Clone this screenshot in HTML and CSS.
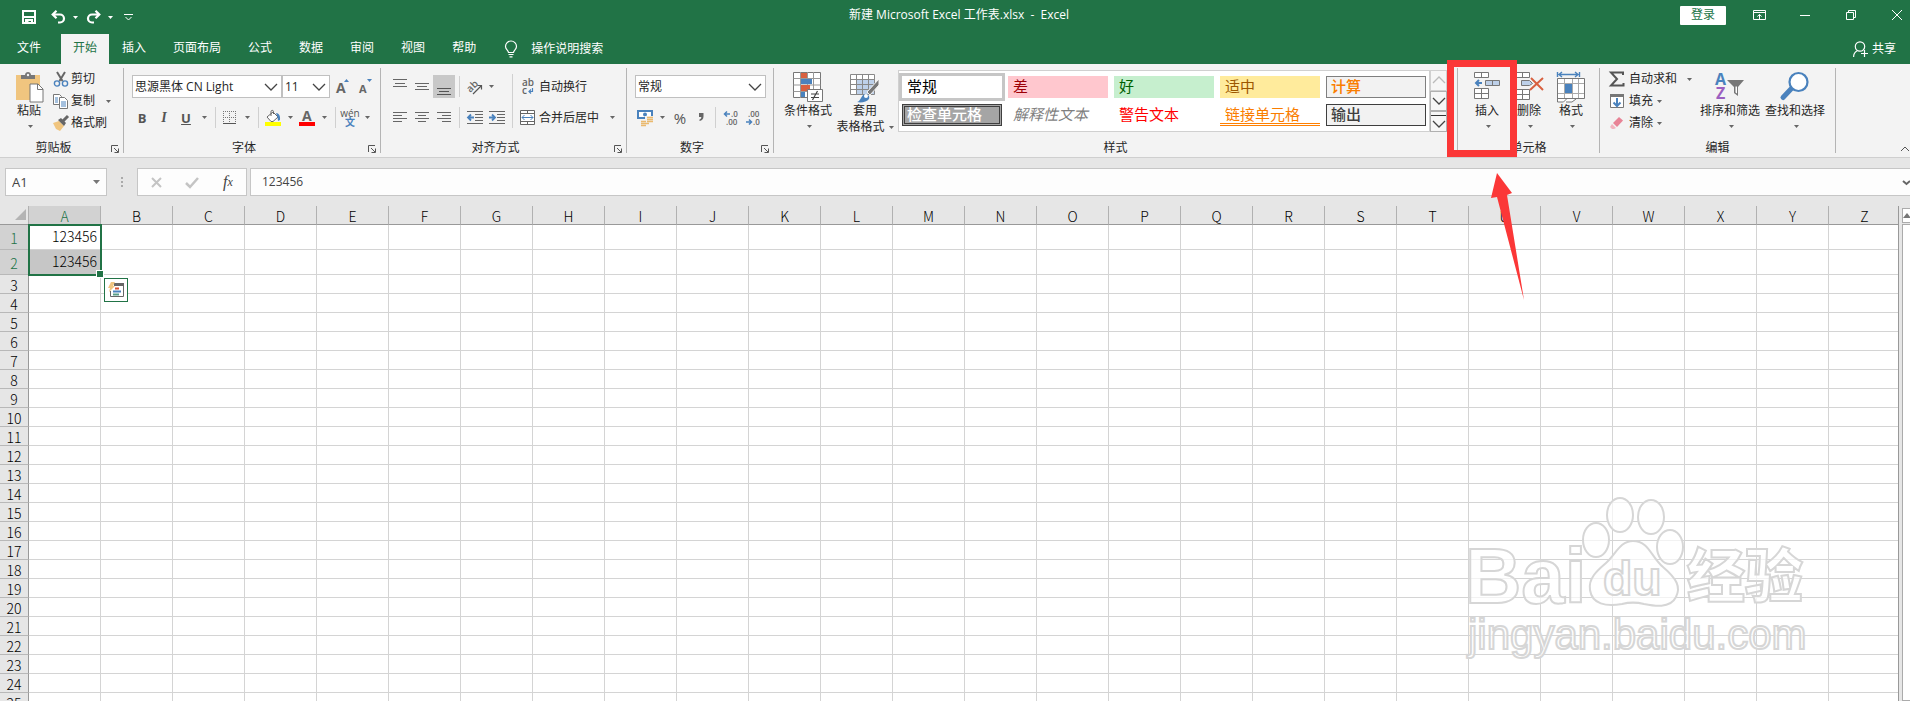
FILE: index.html
```
<!DOCTYPE html>
<html lang="zh-CN">
<head>
    <meta charset="UTF-8">
    <meta name="viewport" content="width=device-width, initial-scale=1.0">
    <title>新建 Microsoft Excel 工作表.xlsx - Excel</title>
    <link rel="stylesheet" href="styles.css">
</head>
<body>
    <svg class="defs" width="0" height="0">
        <symbol id="caret" viewBox="0 0 5 3"><path d="M0 0h5L2.500 3z" fill="currentColor"/></symbol>
        <symbol id="chevron" viewBox="0 0 14 8"><path d="M1 1l6 6 6-6" fill="none" stroke="currentColor" stroke-width="1.300"/></symbol>
        <symbol id="launch" viewBox="0 0 8 8"><path d="M.5 7V.5H7M3 3l4 4M7.500 3.500v4h-4" fill="none" stroke="#555"/></symbol>
    </svg>

    <!-- Title bar -->
    <header class="title-bar">
        <div class="quick-access">
            <button class="qa" aria-label="保存"><svg width="14" height="14" viewBox="0 0 14 14"><path d="M1 1h12v12H1zM1 7h12M4 13v-3h6v3" fill="none" stroke="#fff" stroke-width="2"/><path d="M4.500 11h2v2h-2z" fill="#fff"/></svg></button>
            <button class="qa undo" aria-label="撤消"><svg width="15" height="14" viewBox="0 0 15 14"><path d="M1.500 4.500H9a4 4 0 0 1 0 8H7M5.500.8L1.700 4.500l3.800 3.700" fill="none" stroke="#fff" stroke-width="2.200"/></svg></button>
            <button class="qa-caret" aria-label="撤消列表"><svg class="caret"><use href="#caret"/></svg></button>
            <button class="qa" aria-label="恢复"><svg width="15" height="14" viewBox="0 0 15 14"><path d="M13.500 4.500H6a4 4 0 0 0 0 8h2M9.500.8l3.800 3.700-3.800 3.700" fill="none" stroke="#fff" stroke-width="2.200"/></svg></button>
            <button class="qa-caret" aria-label="恢复列表"><svg class="caret"><use href="#caret"/></svg></button>
            <button class="qa" aria-label="自定义快速访问工具栏"><svg width="9" height="7" viewBox="0 0 9 7"><path d="M0 .5h9M1.500 3l3 3 3-3" fill="none" stroke="#fff"/></svg></button>
        </div>
        <div class="doc-title">新建 Microsoft Excel 工作表.xlsx&nbsp; -&nbsp; Excel</div>
        <div class="window-tools">
            <button class="login">登录</button>
            <button class="win" aria-label="功能区显示选项"><svg width="13" height="10" viewBox="0 0 13 10"><path d="M.5.5h12v9H.5zM.5 2.500h12M6.500 9V4.500M4.300 6.500l2.200-2 2.200 2" fill="none" stroke="#fff"/></svg></button>
            <button class="win" aria-label="最小化"><svg width="10" height="10" viewBox="0 0 10 10"><path d="M0 5.500h10" stroke="#fff"/></svg></button>
            <button class="win" aria-label="还原"><svg width="10" height="10" viewBox="0 0 10 10"><path d="M.5 2.500h7v7h-7zM2.500 2.500v-2h7v7h-2" fill="none" stroke="#fff"/></svg></button>
            <button class="win" aria-label="关闭"><svg width="10" height="10" viewBox="0 0 10 10"><path d="M0 0l10 10M10 0L0 10" stroke="#fff"/></svg></button>
        </div>
    </header>

    <!-- Ribbon tabs -->
    <nav class="tabs">
        <button class="tab file">文件</button>
        <button class="tab active">开始</button>
        <button class="tab">插入</button>
        <button class="tab">页面布局</button>
        <button class="tab">公式</button>
        <button class="tab">数据</button>
        <button class="tab">审阅</button>
        <button class="tab">视图</button>
        <button class="tab">帮助</button>
        <button class="tell-me"><svg width="12" height="17" viewBox="0 0 12 17"><path d="M3.500 11.500c0-2-3-3-3-6a5.500 5.500 0 0 1 11 0c0 3-3 4-3 6zM3.500 13.500h5M4.500 15.800h3" fill="none" stroke="#fff" stroke-width="1.200"/></svg>操作说明搜索</button>
        <button class="share"><svg width="15" height="16" viewBox="0 0 15 16"><circle cx="7" cy="5.500" r="4.700" fill="none" stroke="#fff" stroke-width="1.200"/><path d="M.6 16c0-3 1.400-5 3.600-6.200M11.500 9v7M8 12.500h7" fill="none" stroke="#fff" stroke-width="1.200"/></svg>共享</button>
    </nav>

    <!-- Ribbon -->
    <section class="ribbon">
        <div class="group clipboard">
            <div class="group-body">
                <button class="big paste">
                    <svg width="29" height="31" viewBox="0 0 29 31"><path d="M1 3h24v25H1z" fill="#f0c57f"/><path d="M6 7V3h4c0-4 6-4 6 0h4v4z" fill="#777"/><circle cx="13" cy="3" r="1.200" fill="#f3f3f3"/><path d="M15 12h8l5 5v13H15z" fill="#fff" stroke="#777"/><path d="M22.500 12v5.500H28" fill="none" stroke="#777"/></svg>
                    <span>粘贴</span>
                    <svg class="caret line"><use href="#caret"/></svg>
                </button>
                <div class="stack">
                    <button class="item"><svg width="16" height="15" viewBox="0 0 16 15"><path d="M4 0l5.500 9M12 0L6.500 9" stroke="#666" stroke-width="2"/><circle cx="4" cy="11.500" r="2.600" fill="none" stroke="#4a82bd" stroke-width="1.400"/><circle cx="12" cy="11.500" r="2.600" fill="none" stroke="#4a82bd" stroke-width="1.400"/></svg>剪切</button>
                    <button class="item copy"><svg width="16" height="15" viewBox="0 0 16 15"><path d="M.5.5h6l2 2v8h-8z" fill="#fff" stroke="#777"/><path d="M6.500 3.500h5l3 3v8h-8z" fill="#fff" stroke="#777"/><path d="M2 4h3M2 6h3M2 8h3M8 8h5M8 10h5M8 12h5" stroke="#4a82bd"/></svg>复制<svg class="caret"><use href="#caret"/></svg></button>
                    <button class="item"><svg width="16" height="15" viewBox="0 0 16 15"><path d="M0 7l6-2 5 5-4 5-4-2z" fill="#f0c57f"/><path d="M5 4l3-2 5 5-2 3z" fill="#666"/><path d="M10 5l5-5" stroke="#666" stroke-width="3"/></svg>格式刷</button>
                </div>
            </div>
            <div class="group-label"><span>剪贴板</span><button class="launcher" aria-label="剪贴板设置"><svg width="8" height="8"><use href="#launch"/></svg></button></div>
        </div>

        <div class="group font">
            <div class="group-body rows">
                <div class="row">
                    <label class="combo font-name"><select aria-label="字体"><option>思源黑体 CN Light</option></select><svg class="chev"><use href="#chevron"/></svg></label>
                    <label class="combo font-size"><select aria-label="字号"><option>11</option></select><svg class="chev"><use href="#chevron"/></svg></label>
                    <button class="tool grow" aria-label="增大字号"><svg width="13" height="15" viewBox="0 0 13 15"><text x="0" y="14" class="glyph big-a">A</text><path d="M8 3h5l-2.500-3z" fill="#4a82bd"/></svg></button>
                    <button class="tool" aria-label="减小字号"><svg width="13" height="15" viewBox="0 0 13 15"><text x="0" y="14" class="glyph small-a">A</text><path d="M8 0h5l-2.500 3z" fill="#4a82bd"/></svg></button>
                </div>
                <div class="row second">
                    <button class="tool wide b">B</button>
                    <button class="tool wide i">I</button>
                    <button class="tool wide u">U</button>
                    <button class="drop" aria-label="下划线"><svg class="caret"><use href="#caret"/></svg></button>
                    <span class="sep"></span>
                    <button class="tool" aria-label="边框"><svg width="14" height="14" viewBox="0 0 14 14"><path d="M.5 0v12M6.500 0v12M12.500 0v12M0 .5h13M0 6.500h13" stroke="#777" stroke-dasharray="1 1"/><path d="M0 12.500h13" stroke="#555"/></svg></button>
                    <button class="drop" aria-label="边框列表"><svg class="caret"><use href="#caret"/></svg></button>
                    <span class="sep"></span>
                    <button class="tool" aria-label="填充颜色"><svg width="16" height="16" viewBox="0 0 16 16"><path d="M2 7l6-5 5 5-5 4.500H6z" fill="#fff" stroke="#666"/><path d="M6 6V1.500C6 0 8.500 0 8.500 1.500V4" fill="none" stroke="#666"/><path d="M11 3c3 0 4.500 3 4 7l-2 1-.5-4z" fill="#4a82bd"/><path d="M0 12h16v4H0z" fill="#ff0"/></svg></button>
                    <button class="drop" aria-label="填充颜色列表"><svg class="caret"><use href="#caret"/></svg></button>
                    <button class="tool" aria-label="字体颜色"><svg width="16" height="16" viewBox="0 0 16 16"><text x="3" y="11" class="glyph color-a">A</text><path d="M0 12h16v4H0z" fill="red"/></svg></button>
                    <button class="drop" aria-label="字体颜色列表"><svg class="caret"><use href="#caret"/></svg></button>
                    <span class="sep"></span>
                    <button class="tool pinyin"><span>wén</span><b>文</b></button>
                    <button class="drop" aria-label="拼音列表"><svg class="caret"><use href="#caret"/></svg></button>
                </div>
            </div>
            <div class="group-label"><span>字体</span><button class="launcher" aria-label="字体设置"><svg width="8" height="8"><use href="#launch"/></svg></button></div>
        </div>

        <div class="group align">
            <div class="group-body">
                <div class="rows">
                    <div class="row">
                        <button class="tool wide" aria-label="顶端对齐"><svg width="14" height="16" viewBox="0 0 14 16"><path d="M0 .5h14M2 4.500h10M0 7.500h14" stroke="#666"/></svg></button>
                        <button class="tool wide" aria-label="垂直居中"><svg width="14" height="16" viewBox="0 0 14 16"><path d="M0 4.500h14M2 7.500h10M0 10.500h14" stroke="#666"/></svg></button>
                        <button class="tool wide on" aria-label="底端对齐"><svg width="14" height="16" viewBox="0 0 14 16"><path d="M0 9.500h14M2 12.500h10M0 15.500h14" stroke="#555"/></svg></button>
                        <span class="sep"></span>
                        <button class="tool" aria-label="方向"><svg width="17" height="16" viewBox="0 0 17 16"><text x="1" y="12" class="glyph ab" transform="rotate(-45 5 9)">ab</text><path d="M7 15l8-8M11.500 6.500H15.500v4" fill="none" stroke="#555" stroke-width="1.200"/></svg></button>
                        <button class="drop" aria-label="方向列表"><svg class="caret"><use href="#caret"/></svg></button>
                    </div>
                    <div class="row second">
                        <button class="tool wide" aria-label="左对齐"><svg width="14" height="11" viewBox="0 0 14 11"><path d="M0 .5h14M0 3.500h9M0 6.500h14M0 9.500h9" stroke="#666"/></svg></button>
                        <button class="tool wide" aria-label="居中"><svg width="14" height="11" viewBox="0 0 14 11"><path d="M0 .5h14M3 3.500h8M0 6.500h14M3 9.500h8" stroke="#666"/></svg></button>
                        <button class="tool wide" aria-label="右对齐"><svg width="14" height="11" viewBox="0 0 14 11"><path d="M0 .5h14M5 3.500h9M0 6.500h14M5 9.500h9" stroke="#666"/></svg></button>
                        <span class="sep"></span>
                        <button class="tool wide" aria-label="减少缩进量"><svg width="16" height="14" viewBox="0 0 16 14"><path d="M0 .5h16M8 3.500h8M8 6.500h8M8 9.500h8M0 12.500h16" stroke="#666"/><path d="M7 6.500H1M4 3.500l-3 3 3 3" fill="none" stroke="#4a82bd" stroke-width="1.800"/></svg></button>
                        <button class="tool wide" aria-label="增加缩进量"><svg width="16" height="14" viewBox="0 0 16 14"><path d="M0 .5h16M8 3.500h8M8 6.500h8M8 9.500h8M0 12.500h16" stroke="#666"/><path d="M0 6.500h6M3 3.500l3 3-3 3" fill="none" stroke="#4a82bd" stroke-width="1.800"/></svg></button>
                    </div>
                </div>
                <span class="sep tall"></span>
                <div class="rows">
                    <button class="row item"><svg width="16" height="16" viewBox="0 0 16 16"><text x="2" y="7" class="glyph ab">ab</text><text x="2" y="15" class="glyph ab">c</text><path d="M12.500 9v3.500H9M11 10.500l-2 2 2 2" fill="none" stroke="#4a82bd" stroke-width="1.200"/></svg>自动换行</button>
                    <button class="row item second merge"><svg width="16" height="16" viewBox="0 0 16 16"><path d="M.5.5h14v14H.5zM.5 3.500h14M.5 11.500h14M7.500.5v3M7.500 11.500v3" fill="#fff" stroke="#666"/><path d="M2 7.500h11M4.500 5l-2.500 2.500L4.500 10M10.500 5L13 7.500 10.500 10" fill="none" stroke="#4a82bd"/></svg>合并后居中<svg class="caret"><use href="#caret"/></svg></button>
                </div>
            </div>
            <div class="group-label"><span>对齐方式</span><button class="launcher" aria-label="对齐设置"><svg width="8" height="8"><use href="#launch"/></svg></button></div>
        </div>

        <div class="group number">
            <div class="group-body rows">
                <div class="row">
                    <label class="combo format"><select aria-label="数字格式"><option>常规</option></select><svg class="chev"><use href="#chevron"/></svg></label>
                </div>
                <div class="row second">
                    <button class="tool" aria-label="会计数字格式"><svg width="16" height="16" viewBox="0 0 16 16"><path d="M1 1h14v7H1z" fill="#fff" stroke="#4a82bd" stroke-width="2"/><circle cx="8" cy="4.500" r="2" fill="#4a82bd"/><path d="M8 6h8v9H4v-4h4z" fill="#f3f3f3"/><path d="M10 7.500h6M10 9.500h6M10 11.500h6M4 11.500h5M4 13.500h8M4 15.500h5" stroke="#eab96e" stroke-width="1.300"/></svg></button>
                    <button class="drop" aria-label="货币列表"><svg class="caret"><use href="#caret"/></svg></button>
                    <button class="tool wide percent">%</button>
                    <button class="tool comma" aria-label="千位分隔"><svg width="5" height="8" viewBox="0 0 5 8"><path d="M0 0h4.500v3.500C4.500 6 3 7.500.5 8V6.500C2 6 2.300 5 2.300 4H0z" fill="#666"/></svg></button>
                    <span class="sep"></span>
                    <button class="tool wide" aria-label="增加小数位数"><svg width="16" height="16" viewBox="0 0 16 16"><path d="M7 4H1.500M4 1.500L1.500 4 4 6.500" fill="none" stroke="#4a82bd" stroke-width="1.500"/><text x="8" y="7" class="glyph dec">.0</text><text x="3" y="15" class="glyph dec">.00</text></svg></button>
                    <button class="tool wide" aria-label="减少小数位数"><svg width="16" height="16" viewBox="0 0 16 16"><text x="3" y="7" class="glyph dec">.00</text><text x="8" y="15" class="glyph dec">.0</text><path d="M1 12h5.500M4 9.500L6.500 12 4 14.500" fill="none" stroke="#4a82bd" stroke-width="1.500"/></svg></button>
                </div>
            </div>
            <div class="group-label"><span>数字</span><button class="launcher" aria-label="数字设置"><svg width="8" height="8"><use href="#launch"/></svg></button></div>
        </div>

        <div class="group styles">
            <div class="group-body">
                <button class="big conditional">
                    <svg width="30" height="31" viewBox="0 0 30 31"><path d="M.5.500h27v25H.5z" fill="#fff" stroke="#777"/><path d="M.5 6.500h27M.5 13h27M.5 19.500h27M7.500 0v26M14.500 0v26M20.500 0v26" stroke="#999"/><path d="M8 1h6v5H8zM8 13h9v6H8z" fill="#d8603f"/><path d="M8 7h11v5H8zM8 20h4v5H8z" fill="#4a82bd"/><path d="M14.500 17.500h15v12h-15z" fill="#fff" stroke="#777"/><path d="M18 22h8M18 25.500h8M24.500 19l-5 9" stroke="#444" stroke-width="1.200"/></svg>
                    <span>条件格式</span>
                    <svg class="caret line"><use href="#caret"/></svg>
                </button>
                <button class="big table-format">
                    <svg width="30" height="31" viewBox="0 0 30 31"><path d="M.5 2.500h24v20H.5z" fill="#fff"/><path d="M6.500 8h18v15h-18z" fill="#bdd0e9"/><path d="M.5 2.500h24v20H.5zM.5 7.500h24M.5 12.500h24M.5 17.500h24M6.500 2v21M12.500 2v21M18.500 2v21" fill="none" stroke="#888"/><path d="M29 7v6l-9 10-3-3z" fill="#777" stroke="#f3f3f3"/><path d="M7 30c4-1 4-7 8-8 3 0 5 2 4 5-2 3-8 4-12 3z" fill="#4a82bd"/><circle cx="16" cy="24" r="2" fill="#fff"/></svg>
                    <span>套用</span>
                    <span class="with-caret">表格格式<svg class="caret"><use href="#caret"/></svg></span>
                </button>
                <div class="gallery">
                    <button class="style normal">常规</button>
                    <button class="style bad">差</button>
                    <button class="style good">好</button>
                    <button class="style neutral">适中</button>
                    <button class="style calc">计算</button>
                    <button class="style check">检查单元格</button>
                    <button class="style explain">解释性文本</button>
                    <button class="style warn">警告文本</button>
                    <button class="style linked">链接单元格</button>
                    <button class="style output">输出</button>
                </div>
                <div class="gallery-nav">
                    <button class="up" aria-label="上一行"><svg class="chev"><use href="#chevron"/></svg></button>
                    <button aria-label="下一行"><svg class="chev"><use href="#chevron"/></svg></button>
                    <button class="more" aria-label="其他"><svg class="chev"><use href="#chevron"/></svg></button>
                </div>
            </div>
            <div class="group-label"><span>样式</span></div>
        </div>

        <div class="group cells">
            <div class="group-body">
                <button class="big">
                    <svg width="27" height="31" viewBox="0 0 27 31"><path d="M.5.500h14v5H.5zM7.500.5v5M.5 16.500h14v10H.5zM.5 21.500h14M7.500 16.500v10" fill="#fff" stroke="#777"/><path d="M11.500 8.500h14v5h-14zM18.500 8.500v5" fill="#bdd0e9" stroke="#777"/><path d="M8 11H2M5 8l-3 3 3 3" fill="none" stroke="#4a82bd" stroke-width="2"/></svg>
                    <span>插入</span>
                    <svg class="caret line"><use href="#caret"/></svg>
                </button>
                <button class="big">
                    <svg width="29" height="31" viewBox="0 0 29 31"><path d="M.5.500h14v5H.5zM7.500.5v5M.5 17.500h14v10H.5zM.5 22.500h14M7.500 17.500v10" fill="#fff" stroke="#777"/><path d="M6.500 8.500h8l3 3-3 2h-8z" fill="#bdd0e9" stroke="#777"/><path d="M16 6l12 12M28 6L15 18" stroke="#d8603f" stroke-width="2"/></svg>
                    <span>删除</span>
                    <svg class="caret line"><use href="#caret"/></svg>
                </button>
                <button class="big">
                    <svg width="28" height="31" viewBox="0 0 28 31"><path d="M.5 0v5M22.500 0v5M2 2.500h19M5 0L2 2.500 5 5M18 0l3 2.500L18 5" fill="none" stroke="#4a82bd" stroke-width="1.400"/><path d="M.5 6.500h27v20H18l-3 4H.5z" fill="#fff"/><path d="M.5 11.500h27M.5 21.500h27M7.500 6v20M15.500 6v20M21.500 6v20" stroke="#aaa"/><path d="M.5 6.500h27v20H.5zM.5 26v4h6l3-3M9 30h6l4-3" fill="none" stroke="#777"/><path d="M8 12h7v9H8z" fill="#4a82bd"/></svg>
                    <span>格式</span>
                    <svg class="caret line"><use href="#caret"/></svg>
                </button>
            </div>
            <div class="group-label"><span>单元格</span></div>
        </div>

        <div class="group edit">
            <div class="group-body">
                <div class="stack">
                    <button class="item sum"><svg width="16" height="16" viewBox="0 0 16 16"><path d="M14 4V1.500H2L8 8l-6 6.500h12.500V12" fill="none" stroke="#555" stroke-width="2"/></svg>自动求和<svg class="caret"><use href="#caret"/></svg></button>
                    <button class="item"><svg width="16" height="16" viewBox="0 0 16 16"><path d="M1.500 1.500h13v13h-13z" fill="#fff" stroke="#777"/><path d="M1 1h14v3H1z" fill="#777"/><path d="M8 5v8M4.500 9.500L8 13l3.500-3.500" fill="none" stroke="#4a82bd" stroke-width="2"/></svg>填充<svg class="caret"><use href="#caret"/></svg></button>
                    <button class="item"><svg width="16" height="16" viewBox="0 0 16 16"><path d="M4 8l6-6 4 3.500-6 6.500z" fill="#e88396"/><path d="M3 9l4 4-2 1H3l-2-2z" fill="#f2b3be"/></svg>清除<svg class="caret"><use href="#caret"/></svg></button>
                </div>
                <button class="big sort">
                    <svg width="30" height="31" viewBox="0 0 30 31"><text x="0" y="13" class="glyph sort-a">A</text><text x="1" y="27" class="glyph sort-z">Z</text><path d="M12 8h17l-6 7v9l-4-3v-6z" fill="#777"/><path d="M20.500 14.500v6l1.500 1v-7z" fill="#fff"/></svg>
                    <span>排序和筛选</span>
                    <svg class="caret line"><use href="#caret"/></svg>
                </button>
                <button class="big find">
                    <svg width="28" height="31" viewBox="0 0 28 31"><path d="M10 17l-8 8.500" stroke="#4a82bd" stroke-width="5" stroke-linecap="round"/><circle cx="17.500" cy="10" r="9" fill="#fff" stroke="#4a82bd" stroke-width="2.200"/></svg>
                    <span>查找和选择</span>
                    <svg class="caret line"><use href="#caret"/></svg>
                </button>
            </div>
            <div class="group-label"><span>编辑</span></div>
        </div>
        <button class="collapse" aria-label="折叠功能区"><svg width="10" height="6" viewBox="0 0 10 6"><path d="M1 5l4-4 4 4" fill="none" stroke="#555"/></svg></button>
    </section>

    <!-- Formula bar -->
    <section class="formula-bar">
        <div class="name-box">
            <input type="text" value="A1" aria-label="名称框">
            <svg width="7" height="4" viewBox="0 0 7 4"><path d="M0 0h7L3.500 4z" fill="#777"/></svg>
        </div>
        <svg class="dots" width="3" height="11" viewBox="0 0 3 11"><path d="M0 0h2v2H0zM0 4h2v2H0zM0 8h2v2H0z" fill="#aaa"/></svg>
        <div class="formula-tools">
            <button aria-label="取消"><svg width="11" height="11" viewBox="0 0 11 11"><path d="M1 1l9 9M10 1l-9 9" stroke="#c4c4c4" stroke-width="2"/></svg></button>
            <button aria-label="输入"><svg width="14" height="11" viewBox="0 0 14 11"><path d="M1 6l4 4 8-9" fill="none" stroke="#c4c4c4" stroke-width="2.500"/></svg></button>
            <button class="fx"><i>f</i><small>x</small></button>
        </div>
        <div class="formula-field">
            <input type="text" value="123456" aria-label="编辑栏">
            <svg width="7" height="5" viewBox="0 0 7 5"><path d="M0 1l3.500 3L7 1" fill="none" stroke="#666" stroke-width="2"/></svg>
        </div>
    </section>

    <!-- Sheet -->
    <main class="workspace">
        <div class="sheet">
            <table class="grid">
                <thead><tr id="columns"><th class="corner"><svg width="11" height="11" viewBox="0 0 11 11"><path d="M11 0v11H0z" fill="#b4b4b4"/></svg></th></tr></thead>
                <tbody id="rows"></tbody>
            </table>
            <div class="selection"><span class="handle"></span></div>
            <button class="quick-analysis" aria-label="快速分析"><svg width="16" height="16" viewBox="0 0 16 16"><path d="M5 1.500h10.500v13h-13V9" fill="#fff" stroke="#666"/><path d="M6 1h10v3H6z" fill="#666"/><path d="M7 6.500h4" stroke="#d8502f" stroke-width="2"/><path d="M5 9.500h8" stroke="#4a82bd" stroke-width="2"/><path d="M5 12.500h6" stroke="#5a9e88" stroke-width="2"/><path d="M3 0h4L5 4h2L1 10l1-4H0z" fill="#f0c57f"/></svg></button>
        </div>
        <div class="scrollbar">
            <button aria-label="向上滚动"><svg width="8" height="5" viewBox="0 0 8 5"><path d="M0 5l4-5 4 5z" fill="#777"/></svg></button>
            <div class="track"></div>
        </div>
    </main>

    <!-- Marks drawn over the window -->
    <div class="marker"></div>
    <svg class="arrow" width="36" height="128" viewBox="0 0 36 128"><path d="M7 0l15 20-5 2 17 105L7 24l-6 1z" fill="#fb3737"/></svg>
    <svg class="watermark" width="350" height="176" viewBox="0 0 350 176">
        <g class="mark">
            <text x="3" y="113" class="wm-bai">Bai</text>
            <ellipse cx="134" cy="50" rx="13" ry="17"/>
            <ellipse cx="158" cy="25" rx="13" ry="17"/>
            <ellipse cx="189" cy="27" rx="13" ry="17"/>
            <ellipse cx="208" cy="57" rx="13" ry="17"/>
            <path d="M171 51c16 0 18 16 30 26 14 12 18 20 13 30-6 12-22 9-32 7-8-2-14-2-22 0-16 3-30 0-32-14-2-12 8-20 16-27 10-9 14-22 27-22z"/>
            <text x="141" y="105" class="wm-du">du</text>
            <text x="225" y="107" class="wm-cn">经验</text>
            <text x="6" y="159" class="wm-url">jingyan.baidu.com</text>
        </g>
    </svg>

    <script>
        const letters = "ABCDEFGHIJKLMNOPQRSTUVWXYZ";
        const values = { A1: "123456", A2: "123456" };
        const rowCount = 25;

        function createGrid() {
            const columns = document.getElementById("columns");
            const rows = document.getElementById("rows");
            for (const letter of letters) {
                const th = document.createElement("th");
                th.textContent = letter;
                if (letter === "A") th.classList.add("selected");
                columns.appendChild(th);
            }
            for (let i = 1; i <= rowCount; i++) {
                const tr = document.createElement("tr");
                const th = document.createElement("th");
                th.textContent = i;
                tr.appendChild(th);
                if (i <= 2) {
                    tr.classList.add("filled");
                    th.classList.add("selected");
                }
                for (const letter of letters) {
                    const td = document.createElement("td");
                    td.textContent = values[letter + i] || "";
                    if (letter + i === "A2") td.classList.add("shaded");
                    tr.appendChild(td);
                }
                rows.appendChild(tr);
            }
        }

        createGrid();
    </script>
</body>
</html>
```
FILE: styles.css
```
* {
    box-sizing: border-box;
}

body {
    margin: 0;
    height: 100vh;
    overflow: hidden;
    position: relative;
    display: flex;
    flex-direction: column;
    background-color: #e6e6e6;
    color: #262626;
    font-family: "Open Sans", "Noto Sans CJK SC", sans-serif;
    font-size: 12px;
    line-height: 16px;
}

button {
    border: 0;
    padding: 0;
    background: none;
    color: inherit;
    font: inherit;
    display: flex;
    align-items: center;
    justify-content: center;
    white-space: nowrap;
}

svg {
    display: block;
    flex: none;
    overflow: visible;
}

.defs { position: absolute; }

.caret {
    width: 5px;
    height: 3px;
    color: #666;
}

.chev {
    width: 14px;
    height: 8px;
    color: #444;
}

/* Title bar */
.title-bar {
    flex: none;
    height: 34px;
    display: grid;
    grid-template-columns: 1fr auto 1fr;
    background-color: #217346;
    color: white;
}

.title-bar .caret { color: white; }

.quick-access {
    display: flex;
    align-items: center;
    padding-left: 18px;
}

.qa { width: 22px; }
.undo { margin-left: 7px; }
.qa-caret { width: 13px; height: 20px; }

.doc-title {
    padding: 7px 0 0 8px;
}

.window-tools {
    display: flex;
    justify-content: flex-end;
    align-items: center;
    gap: 20px;
    padding-bottom: 4px;
}

.win {
    width: 26px;
    height: 20px;
}

.login {
    width: 46px;
    height: 19px;
    border-radius: 1px;
    background-color: white;
    color: #217346;
}

/* Tabs */
.tabs {
    flex: none;
    height: 30px;
    display: flex;
    background-color: #217346;
    color: white;
}

.tab {
    padding: 0 14px 2px 13px;
}

.tab.file { padding: 0 19px 2px 17px; }

.tab.active {
    margin-left: 1px;
    padding: 0 12px 2px;
    background-color: #f3f3f3;
    color: #217346;
}

.tell-me {
    gap: 14px;
    margin-left: 15px;
}

.share {
    gap: 4px;
    margin-left: auto;
    padding-right: 14px;
}

/* Ribbon */
.ribbon {
    flex: none;
    height: 94px;
    display: flex;
    padding: 4px 0;
    background-color: #f3f3f3;
    border-bottom: 1px solid #cfcfcf;
}

.group {
    flex: none;
    display: flex;
    flex-direction: column;
    border-right: 1px solid #b4b4b4;
}

.group-body {
    display: flex;
    height: 72px;
}

.group-label {
    display: flex;
    height: 14px;
    line-height: 18px;
}

.group-label span {
    flex: 1;
    text-align: center;
}

.launcher {
    width: 16px;
    padding-top: 5px;
}

.rows {
    display: flex;
    flex-direction: column;
    gap: 8px;
    padding-top: 7px;
}

.row {
    display: flex;
    align-items: center;
    height: 23px;
}

.stack {
    display: flex;
    flex-direction: column;
}

.item {
    height: 22px;
    gap: 2px;
    justify-content: flex-start;
}

.item .caret { margin-left: 9px; }
.item.merge .caret { margin-left: 8px; }

.big {
    flex-direction: column;
    justify-content: flex-start;
    padding-top: 4px;
    width: 42px;
}

.big > .line {
    margin: 6px 0 0 2px;
}

.with-caret {
    display: flex;
    align-items: center;
    gap: 4px;
}

.tool {
    width: 20px;
    height: 23px;
}

.tool.wide { width: 22px; }
.tool.on { background-color: #c8c8c8; }

.drop {
    width: 14px;
    height: 23px;
}

.sep {
    width: 1px;
    height: 21px;
    margin: 0 4px;
    background-color: #d0d0d0;
}

.sep.tall {
    height: 54px;
    margin-top: 6px;
}

.combo {
    display: grid;
    align-items: center;
    border: 1px solid #c0c0c0;
    background-color: white;
    height: 23px;
}

.combo > * { grid-area: 1 / 1; }

.combo .chev {
    justify-self: end;
    margin-right: 3px;
    pointer-events: none;
}

.combo select {
    appearance: none;
    border: 0;
    padding: 0 2px;
    height: 21px;
    width: 100%;
    background: none;
    color: #262626;
    font: inherit;
}

.clipboard { width: 124px; }
.paste { width: 42px; margin-left: 8px; }
.paste + .stack { margin-left: 3px; }

.font { width: 257px; }
.font .rows { padding-left: 7px; }
.font-name { width: 150px; margin-left: 1px; }
.font-size { width: 48px; border-left-width: 1px; }
.grow { margin: 0 3px 0 2px; }

.b { font-weight: bold; color: #555; font-size: 13px; }
.i { font-family: "Liberation Serif", serif; font-weight: bold; font-style: italic; color: #555; font-size: 14px; }
.u { font-weight: bold; text-decoration: underline; color: #555; font-size: 13px; }

.pinyin {
    flex-direction: column;
    color: #555;
    font-size: 10px;
    line-height: 9px;
}

.pinyin b { color: #4a82bd; }

.glyph {
    font-family: "Open Sans", sans-serif;
    font-weight: bold;
    fill: #666;
}

.big-a { font-size: 14px; }
.small-a { font-size: 11px; }
.color-a { font-size: 14px; }
.ab { font-size: 10px; font-weight: 600; }
.dec { font-size: 8px; font-weight: 600; }
.sort-a { font-size: 16px; fill: #4a82bd; }
.sort-z { font-size: 16px; fill: #9b5fc0; }

.align { width: 246px; }
.align .group-body { padding-left: 8px; }
.align .item { height: 23px; gap: 3px; padding-left: 3px; }

.number { width: 147px; }
.number .rows { padding-left: 8px; }
.format { width: 131px; }
.percent { font-size: 15px; color: #555; }
.comma { padding-bottom: 2px; }

.styles { width: 684px; }
.conditional { width: 52px; margin-left: 8px; }
.table-format { width: 62px; }

.gallery {
    display: grid;
    grid-template-columns: repeat(5, 100px);
    grid-auto-rows: 22px;
    gap: 6px;
    margin: 2px 0 0 2px;
    padding: 5px 3px;
    height: 62px;
    background-color: white;
    border: 1px solid #d0d0d0;
}

.style {
    justify-content: flex-start;
    padding: 0 0 2px 5px;
    font-size: 15px;
}

.normal { outline: 3px solid #c6c6c6; color: black; }
.bad { background-color: #ffc7ce; color: #9c0006; }
.good { background-color: #c6efce; color: #006100; }
.neutral { background-color: #ffeb9c; color: #9c5700; }
.calc { background-color: #f2f2f2; border: 1px solid #7f7f7f; color: #fa7d00; font-weight: 500; padding-left: 4px; }
.check { background-color: #a5a5a5; border: 3px double #3f3f3f; color: white; font-weight: 500; padding-left: 2px; }
.explain { color: #7f7f7f; font-style: italic; }
.warn { color: red; }
.linked { border-bottom: 3px double #ff8001; color: #fa7d00; padding-bottom: 0; }
.output { background-color: #f2f2f2; border: 1px solid #3f3f3f; color: #3f3f3f; font-weight: 500; padding-left: 4px; }

.gallery-nav {
    display: flex;
    flex-direction: column;
    margin-top: 2px;
    height: 62px;
}

.gallery-nav button {
    flex: 1;
    width: 17px;
    border: 1px solid #b0b0b0;
    background-color: #f6f6f6;
}

.gallery-nav .up { border-color: #d0d0d0; }
.gallery-nav .up svg { transform: rotate(180deg); color: #bbb; }

.gallery-nav .more {
    flex-direction: column;
    gap: 4px;
}

.gallery-nav .more::before {
    content: "";
    width: 15px;
    height: 1px;
    background-color: #333;
}

.cells { width: 142px; }
.cells .group-body { padding-left: 8px; }

.edit { width: 236px; }
.edit .stack { width: 90px; margin-left: 9px; }
.edit .item { gap: 4px; }
.edit .item .caret { margin-left: 0; }
.edit .sum .caret { margin-left: 6px; }
.sort { width: 62px; }
.find { width: 68px; }

.collapse {
    margin-left: auto;
    align-self: flex-end;
    width: 10px;
    height: 8px;
}

/* Formula bar */
.formula-bar {
    flex: none;
    display: flex;
    align-items: center;
    padding: 10px 0;
    color: #444;
}

.formula-bar input {
    flex: 1;
    min-width: 0;
    border: 0;
    padding: 0;
    background: none;
    color: inherit;
    font: inherit;
}

.name-box,
.formula-tools,
.formula-field {
    display: flex;
    align-items: center;
    height: 28px;
    background-color: #fdfdfd;
    border: 1px solid #c6c6c6;
}

.name-box {
    width: 102px;
    margin-left: 5px;
    padding: 0 6px;
    font-size: 13px;
}

.dots { margin: 0 13px 0 14px; }

.formula-tools {
    width: 110px;
    justify-content: space-around;
}

.formula-tools button { width: 24px; height: 24px; }

.formula-tools .fx {
    font-family: "Liberation Serif", serif;
    font-size: 16px;
    color: #444;
}

.fx small { font-size: 12px; font-style: italic; }

.formula-field {
    flex: 1;
    margin-left: 3px;
    padding-left: 11px;
    border-right: 0;
}

/* Sheet */
.workspace {
    flex: 1;
    min-height: 0;
    display: flex;
}

.sheet {
    flex: 1;
    min-width: 0;
    position: relative;
    overflow: hidden;
}

.grid {
    border-collapse: separate;
    border-spacing: 0;
    font-family: "Noto Sans CJK SC", sans-serif;
    font-size: 14px;
    line-height: 16px;
    color: black;
}

.grid th {
    padding: 2px 0 0;
    height: 19px;
    font-weight: 300;
    background-color: #e6e6e6;
    border-right: 1px solid #b1b1b1;
    border-bottom: 1px solid #999;
}

.grid thead th { min-width: 72px; }

.grid thead .corner {
    min-width: 29px;
    padding: 0 0 2px 15px;
}

.grid tbody th {
    border-right-color: #999;
    border-bottom-color: #b8b8b8;
}

.grid .selected {
    background-color: #d2d2d2;
    color: #217346;
}

.grid td {
    padding: 0 3px 2px 0;
    height: 19px;
    font-weight: 300;
    text-align: right;
    background-color: white;
    border-right: 1px solid #d4d4d4;
    border-bottom: 1px solid #d4d4d4;
}

.grid .filled th,
.grid .filled td { height: 25px; }

.grid .shaded { background-color: #c6c6c6; }

.selection {
    position: absolute;
    left: 28px;
    top: 18px;
    width: 74px;
    height: 52px;
    border: 2px solid #217346;
}

.handle {
    position: absolute;
    right: -3px;
    bottom: -3px;
    width: 6px;
    height: 6px;
    background-color: #217346;
    outline: 1px solid white;
}

.quick-analysis {
    position: absolute;
    left: 104px;
    top: 72px;
    width: 24px;
    height: 24px;
    border: 1px solid #217346;
    background-color: white;
}

.scrollbar {
    width: 12px;
    padding: 2px 0 0 3px;
    border-left: 1px solid #999;
    display: flex;
    flex-direction: column;
    overflow: hidden;
}

.scrollbar button {
    height: 15px;
    border: 1px solid #ababab;
    border-right: 0;
    background-color: white;
}

.track {
    flex: 1;
    margin-top: 1px;
    border: 1px solid #ababab;
    border-right: 0;
    background-color: white;
}

/* Marks over the window */
.marker {
    position: absolute;
    left: 1447px;
    top: 60px;
    width: 70px;
    height: 97px;
    border: 7px solid #fb3737;
}

.arrow {
    position: absolute;
    left: 1490px;
    top: 173px;
}

.watermark {
    position: absolute;
    right: 98px;
    bottom: 35px;
    pointer-events: none;
}

.mark {
    fill: rgba(255, 255, 255, 0.7);
    stroke: #d6d6d6;
    stroke-width: 2px;
}

.wm-bai { font: bold 78px "Liberation Sans", sans-serif; }
.wm-du { font: bold 48px "Liberation Sans", sans-serif; }
.wm-cn { font: 900 58px "Noto Sans CJK SC", sans-serif; }
.wm-url { font: 42px "Liberation Sans", sans-serif; }
```
